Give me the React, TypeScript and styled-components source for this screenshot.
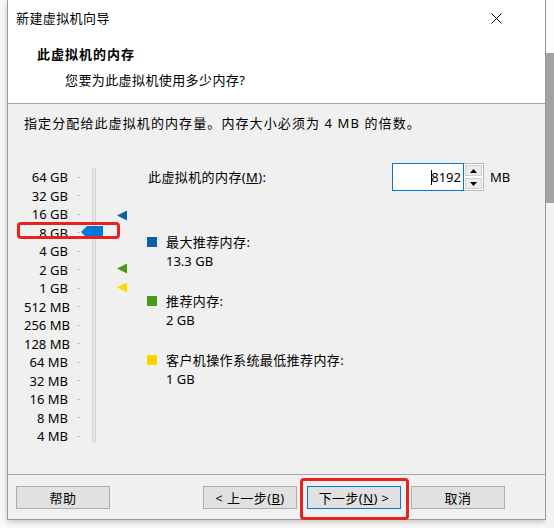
import React from "react";
import styled, { createGlobalStyle } from "styled-components";

const GlobalStyle = createGlobalStyle`
  html, body { margin: 0; padding: 0; }
  body {
    background: #f7f7f7;
    font-family: "Noto Sans", "Noto Sans CJK SC", sans-serif;
    font-size: 13px;
    letter-spacing: 0.4px;
    color: #000;
  }
`;

const Desktop = styled.div`
  display: flex;
  width: 554px;
  height: 528px;
  padding-left: 7px;
  box-sizing: border-box;
  overflow: hidden;
  background: #f9f9f9;
`;

const Window = styled.div`
  display: flex;
  flex-direction: column;
  width: 539px;
  height: 520px;
  box-sizing: border-box;
  border: 1px solid #989898;
  border-top: none;
  background: #fff;
  box-shadow: 0 2px 6px rgba(0, 0, 0, 0.22);
`;

const Backdrop = styled.div`
  flex: 1;
  display: flex;
  flex-direction: column;
`;

const BackdropBand = styled.div<{ $h: number; $bg: string }>`
  height: ${(p) => p.$h}px;
  background: ${(p) => p.$bg};
`;

const TitleBar = styled.div`
  display: flex;
  align-items: center;
  height: 36px;
  padding-left: 8px;
`;

const TitleText = styled.div`
  flex: 1;
  line-height: 18px;
`;

const CloseButton = styled.div`
  display: flex;
  align-items: center;
  justify-content: center;
  width: 46px;
  height: 36px;
  margin-right: 26px;
`;

const Header = styled.div`
  height: 67px;
  padding: 9px 0 0 29px;
  box-sizing: border-box;
`;

const HeaderTitle = styled.div`
  font-weight: bold;
  letter-spacing: 1px;
  line-height: 18px;
`;

const HeaderSub = styled.div`
  margin-top: 8px;
  padding-left: 28px;
  line-height: 18px;
`;

const Divider = styled.div`
  height: 1px;
  background: #a6a6a6;
`;

const Body = styled.div`
  height: 370px;
  box-sizing: border-box;
  padding: 10px 0 0 16px;
  background: #f0f0f0;
`;

const Intro = styled.div`
  line-height: 18px;
  letter-spacing: 1.1px;
`;

const Content = styled.div`
  display: grid;
  grid-template-columns: 124px 1fr;
  margin-top: 26px;
`;

const SliderBox = styled.div`
  position: relative;
  display: flex;
  align-items: flex-start;
  margin-top: 10px;
`;

const Scale = styled.div`
  display: flex;
  flex-direction: column;
`;

const ScaleRow = styled.div`
  display: flex;
  align-items: center;
  height: 18.5px;
`;

const ScaleLabel = styled.div`
  width: 44px;
  text-align: right;
  white-space: nowrap;
  line-height: 18px;
  letter-spacing: 0;
`;

const Tick = styled.div`
  width: 3px;
  height: 1px;
  margin-left: 9px;
  background: #c4c4c4;
`;

const Track = styled.div`
  width: 2px;
  height: 272px;
  margin-left: 12px;
  border: 1px solid #d4d4d4;
  background: #e7e7e7;
`;

const Marker = styled.svg<{ $left: number; $top: number }>`
  position: absolute;
  left: ${(p) => p.$left}px;
  top: ${(p) => p.$top}px;
`;

const RedBox = styled.div<{ $left: number; $top: number; $w: number; $h: number }>`
  position: absolute;
  left: ${(p) => p.$left}px;
  top: ${(p) => p.$top}px;
  width: ${(p) => p.$w}px;
  height: ${(p) => p.$h}px;
  box-sizing: border-box;
  border: 3px solid #e8221d;
  border-radius: 4px;
  pointer-events: none;
`;

const RightPanel = styled.div`
  display: flex;
  flex-direction: column;
`;

const MemRow = styled.div`
  display: flex;
  align-items: center;
  height: 28px;
  margin-top: 5px;
`;

const MemLabel = styled.div`
  width: 244px;
  line-height: 18px;
`;

const Underline = styled.span`
  text-decoration: underline;
`;

const NumberBox = styled.div`
  display: flex;
  align-items: center;
  justify-content: flex-end;
  width: 72px;
  height: 28px;
  box-sizing: border-box;
  padding-right: 2px;
  border: 1px solid #0078d7;
  background: #fff;
  letter-spacing: 0;
`;

const Caret = styled.span`
  display: inline-block;
  width: 1px;
  height: 15px;
  margin-right: -1px;
  background: #000;
`;

const Spinner = styled.div`
  display: flex;
  flex-direction: column;
  width: 20px;
  height: 28px;
  box-sizing: border-box;
  border: 1px solid #b9b9b9;
  border-left: none;
  background: #fff;
`;

const SpinButton = styled.div`
  flex: 1;
  display: flex;
  align-items: center;
  justify-content: center;
  margin: 1px;
  border: 1px solid #cfcfcf;
  background: #ececec;
`;

const Unit = styled.div`
  margin-left: 6px;
  letter-spacing: 0;
`;

const Legends = styled.div`
  display: flex;
  flex-direction: column;
  gap: 21px;
  margin-top: 42px;
`;

const LegendItem = styled.div`
  display: grid;
  grid-template-columns: 18px 1fr;
  line-height: 19px;
`;

const Swatch = styled.div<{ $color: string }>`
  width: 10px;
  height: 10px;
  margin: 4px 0 0 -1px;
  background: ${(p) => p.$color};
`;

const LegendValue = styled.div`
  grid-column: 2;
  letter-spacing: 0;
`;

const Footer = styled.div`
  display: flex;
  height: 44px;
  box-sizing: border-box;
  padding: 11px 40px 0 8px;
  background: #f0f0f0;
`;

const Button = styled.div<{ $default?: boolean }>`
  position: relative;
  display: flex;
  align-items: center;
  justify-content: center;
  width: 94px;
  height: 23px;
  box-sizing: border-box;
  border: 1px solid ${(p) => (p.$default ? "#0078d7" : "#adadad")};
  background: #e1e1e1;
  line-height: 18px;
`;

const Spacer = styled.div`
  flex: 1;
`;

const ButtonGroup = styled.div`
  display: flex;
  gap: 10px;
`;

const scaleLabels = [
  "64 GB", "32 GB", "16 GB", "8 GB", "4 GB", "2 GB", "1 GB",
  "512 MB", "256 MB", "128 MB", "64 MB", "32 MB", "16 MB", "8 MB", "4 MB",
];

const Tri = ({ left, top, color }: { left: number; top: number; color: string }) => (
  <Marker $left={left} $top={top} width="11" height="11" viewBox="0 0 11 11">
    <polygon points="0,5.5 10,0.5 10,10.5" fill={color} />
  </Marker>
);

export default function App() {
  return (
    <>
      <GlobalStyle />
      <Desktop>
        <Window>
          <TitleBar>
            <TitleText>新建虚拟机向导</TitleText>
            <CloseButton>
              <svg width="11" height="11" viewBox="0 0 11 11">
                <path d="M0.5 0.5 L10.5 10.5 M10.5 0.5 L0.5 10.5" stroke="#000" strokeWidth="1" />
              </svg>
            </CloseButton>
          </TitleBar>
          <Header>
            <HeaderTitle>此虚拟机的内存</HeaderTitle>
            <HeaderSub>您要为此虚拟机使用多少内存?</HeaderSub>
          </Header>
          <Divider />
          <Body>
            <Intro>指定分配给此虚拟机的内存量。内存大小必须为 4 MB 的倍数。</Intro>
            <Content>
              <SliderBox>
                <Scale>
                  {scaleLabels.map((l) => (
                    <ScaleRow key={l}>
                      <ScaleLabel>{l}</ScaleLabel>
                      <Tick />
                    </ScaleRow>
                  ))}
                </Scale>
                <Track />
                <Marker $left={57} $top={58} width="22" height="12" viewBox="0 0 22 12">
                  <polygon points="0,6 6,0 22,0 22,12 6,12" fill="#0078d7" />
                </Marker>
                <Tri left={93} top={42} color="#0a62ad" />
                <Tri left={93} top={95} color="#4a9a1a" />
                <Tri left={93} top={114} color="#ffd800" />
                <RedBox $left={-7} $top={54} $w={103} $h={17} />
              </SliderBox>
              <RightPanel>
                <MemRow>
                  <MemLabel>
                    此虚拟机的内存(<Underline>M</Underline>):
                  </MemLabel>
                  <NumberBox>
                    <Caret />
                    8192
                  </NumberBox>
                  <Spinner>
                    <SpinButton>
                      <svg width="7" height="4" viewBox="0 0 7 4">
                        <polygon points="3.5,0 7,4 0,4" fill="#000" />
                      </svg>
                    </SpinButton>
                    <SpinButton>
                      <svg width="7" height="4" viewBox="0 0 7 4">
                        <polygon points="0,0 7,0 3.5,4" fill="#000" />
                      </svg>
                    </SpinButton>
                  </Spinner>
                  <Unit>MB</Unit>
                </MemRow>
                <Legends>
                  <LegendItem>
                    <Swatch $color="#0a62ad" />
                    <div>最大推荐内存:</div>
                    <LegendValue>13.3 GB</LegendValue>
                  </LegendItem>
                  <LegendItem>
                    <Swatch $color="#4a9a1a" />
                    <div>推荐内存:</div>
                    <LegendValue>2 GB</LegendValue>
                  </LegendItem>
                  <LegendItem>
                    <Swatch $color="#ffd800" />
                    <div>客户机操作系统最低推荐内存:</div>
                    <LegendValue>1 GB</LegendValue>
                  </LegendItem>
                </Legends>
              </RightPanel>
            </Content>
          </Body>
          <Divider />
          <Footer>
            <Button>帮助</Button>
            <Spacer />
            <ButtonGroup>
              <Button>&lt; 上一步(<Underline>B</Underline>)</Button>
              <Button $default>
                下一步(<Underline>N</Underline>) &gt;
                <RedBox $left={-8} $top={-9} $w={109} $h={42} />
              </Button>
              <Button>取消</Button>
            </ButtonGroup>
          </Footer>
        </Window>
        <Backdrop>
          <BackdropBand $h={53} $bg="#fbfbfb" />
          <BackdropBand $h={150} $bg="#a3a3a3" />
          <BackdropBand $h={325} $bg="#f2f2f2" />
        </Backdrop>
      </Desktop>
    </>
  );
}
